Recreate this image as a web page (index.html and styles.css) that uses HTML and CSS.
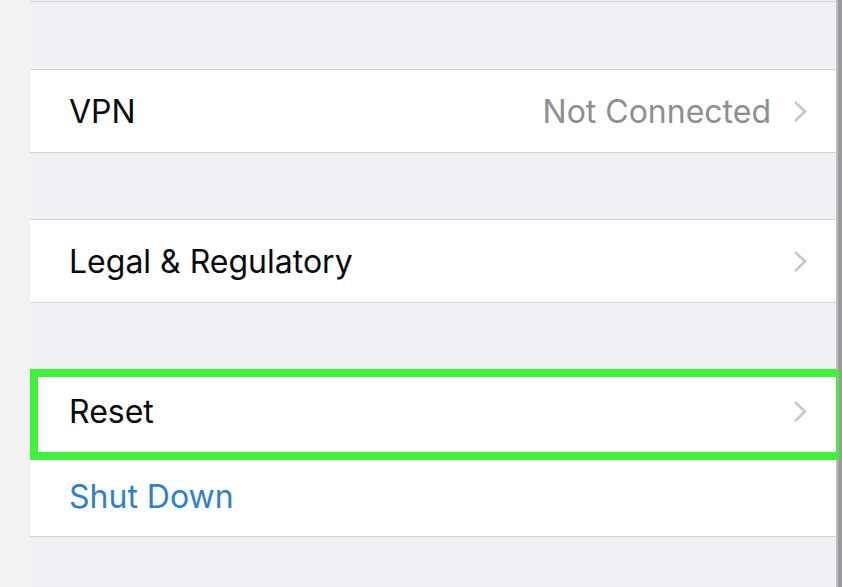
FILE: index.html
```html
<!DOCTYPE html>
<html>
<head>
<meta charset="utf-8">
<link rel="stylesheet" href="styles.css">
</head>
<body>
<div class="screen">
  <div class="gutter"></div>
  <div class="panel">
    <div class="gap gap-first"></div>
    <div class="group">
      <div class="row">
        <span class="label">VPN</span>
        <span class="detail">Not Connected</span>
        <svg class="chev" width="14" height="23" viewBox="0 0 14 23"><polyline points="2,2 12,11.5 2,21" fill="none" stroke="#c7c7cc" stroke-width="2.6"/></svg>
      </div>
    </div>
    <div class="gap"></div>
    <div class="group">
      <div class="row">
        <span class="label">Legal &amp; Regulatory</span>
        <svg class="chev" width="14" height="23" viewBox="0 0 14 23"><polyline points="2,2 12,11.5 2,21" fill="none" stroke="#c7c7cc" stroke-width="2.6"/></svg>
      </div>
    </div>
    <div class="gap"></div>
    <div class="group">
      <div class="row row-sep">
        <span class="label">Reset</span>
        <svg class="chev" width="14" height="23" viewBox="0 0 14 23"><polyline points="2,2 12,11.5 2,21" fill="none" stroke="#c7c7cc" stroke-width="2.6"/></svg>
      </div>
      <div class="row row-last">
        <span class="label action">Shut Down</span>
      </div>
    </div>
    <div class="gap"></div>
  </div>
  <div class="edge"></div>
  <div class="highlight"></div>
</div>
</body>
</html>
```
FILE: styles.css
```css
html, body {
  margin: 0;
  padding: 0;
  background: #f2f2f2;
}
.screen {
  position: relative;
  display: flex;
  width: 842px;
  height: 587px;
  overflow: hidden;
  font-family: "Inter", "Liberation Sans", sans-serif;
}
.gutter {
  width: 30px;
  flex: none;
  background: #f2f2f2;
}
.panel {
  flex: 1;
  background: #f0f0f5;
  padding-top: 1px;
}
.gap {
  height: 66px;
}
.gap-first {
  height: 67px;
  border-top: 1px solid #d3d3d8;
}
.group {
  background: #ffffff;
  border-top: 1px solid #d3d3d8;
  border-bottom: 1px solid #d3d3d8;
}
.row {
  height: 82px;
  display: flex;
  align-items: center;
  padding: 0 29px 0 39px;
}
.row-sep {
  border-bottom: 1px solid #e2e2e6;
}
.row-last {
  height: 83px;
  padding-top: 3px;
  box-sizing: border-box;
}
.label {
  flex: 1;
  font-size: 32px;
  color: #0a0a0a;
}
.detail {
  font-size: 32px;
  color: #8e8e93;
  margin-right: 22px;
}
.action {
  color: #2c7fd6;
}
.chev {
  display: block;
}
.edge {
  width: 6px;
  flex: none;
  background: linear-gradient(to right, #bdbdbd 0, #bdbdbd 2px, #9a9a9a 2px);
}
.highlight {
  position: absolute;
  left: 30px;
  top: 369px;
  width: 798px;
  height: 75px;
  border: 8px solid #3ef23c;
  border-right-width: 3px;
}
```
